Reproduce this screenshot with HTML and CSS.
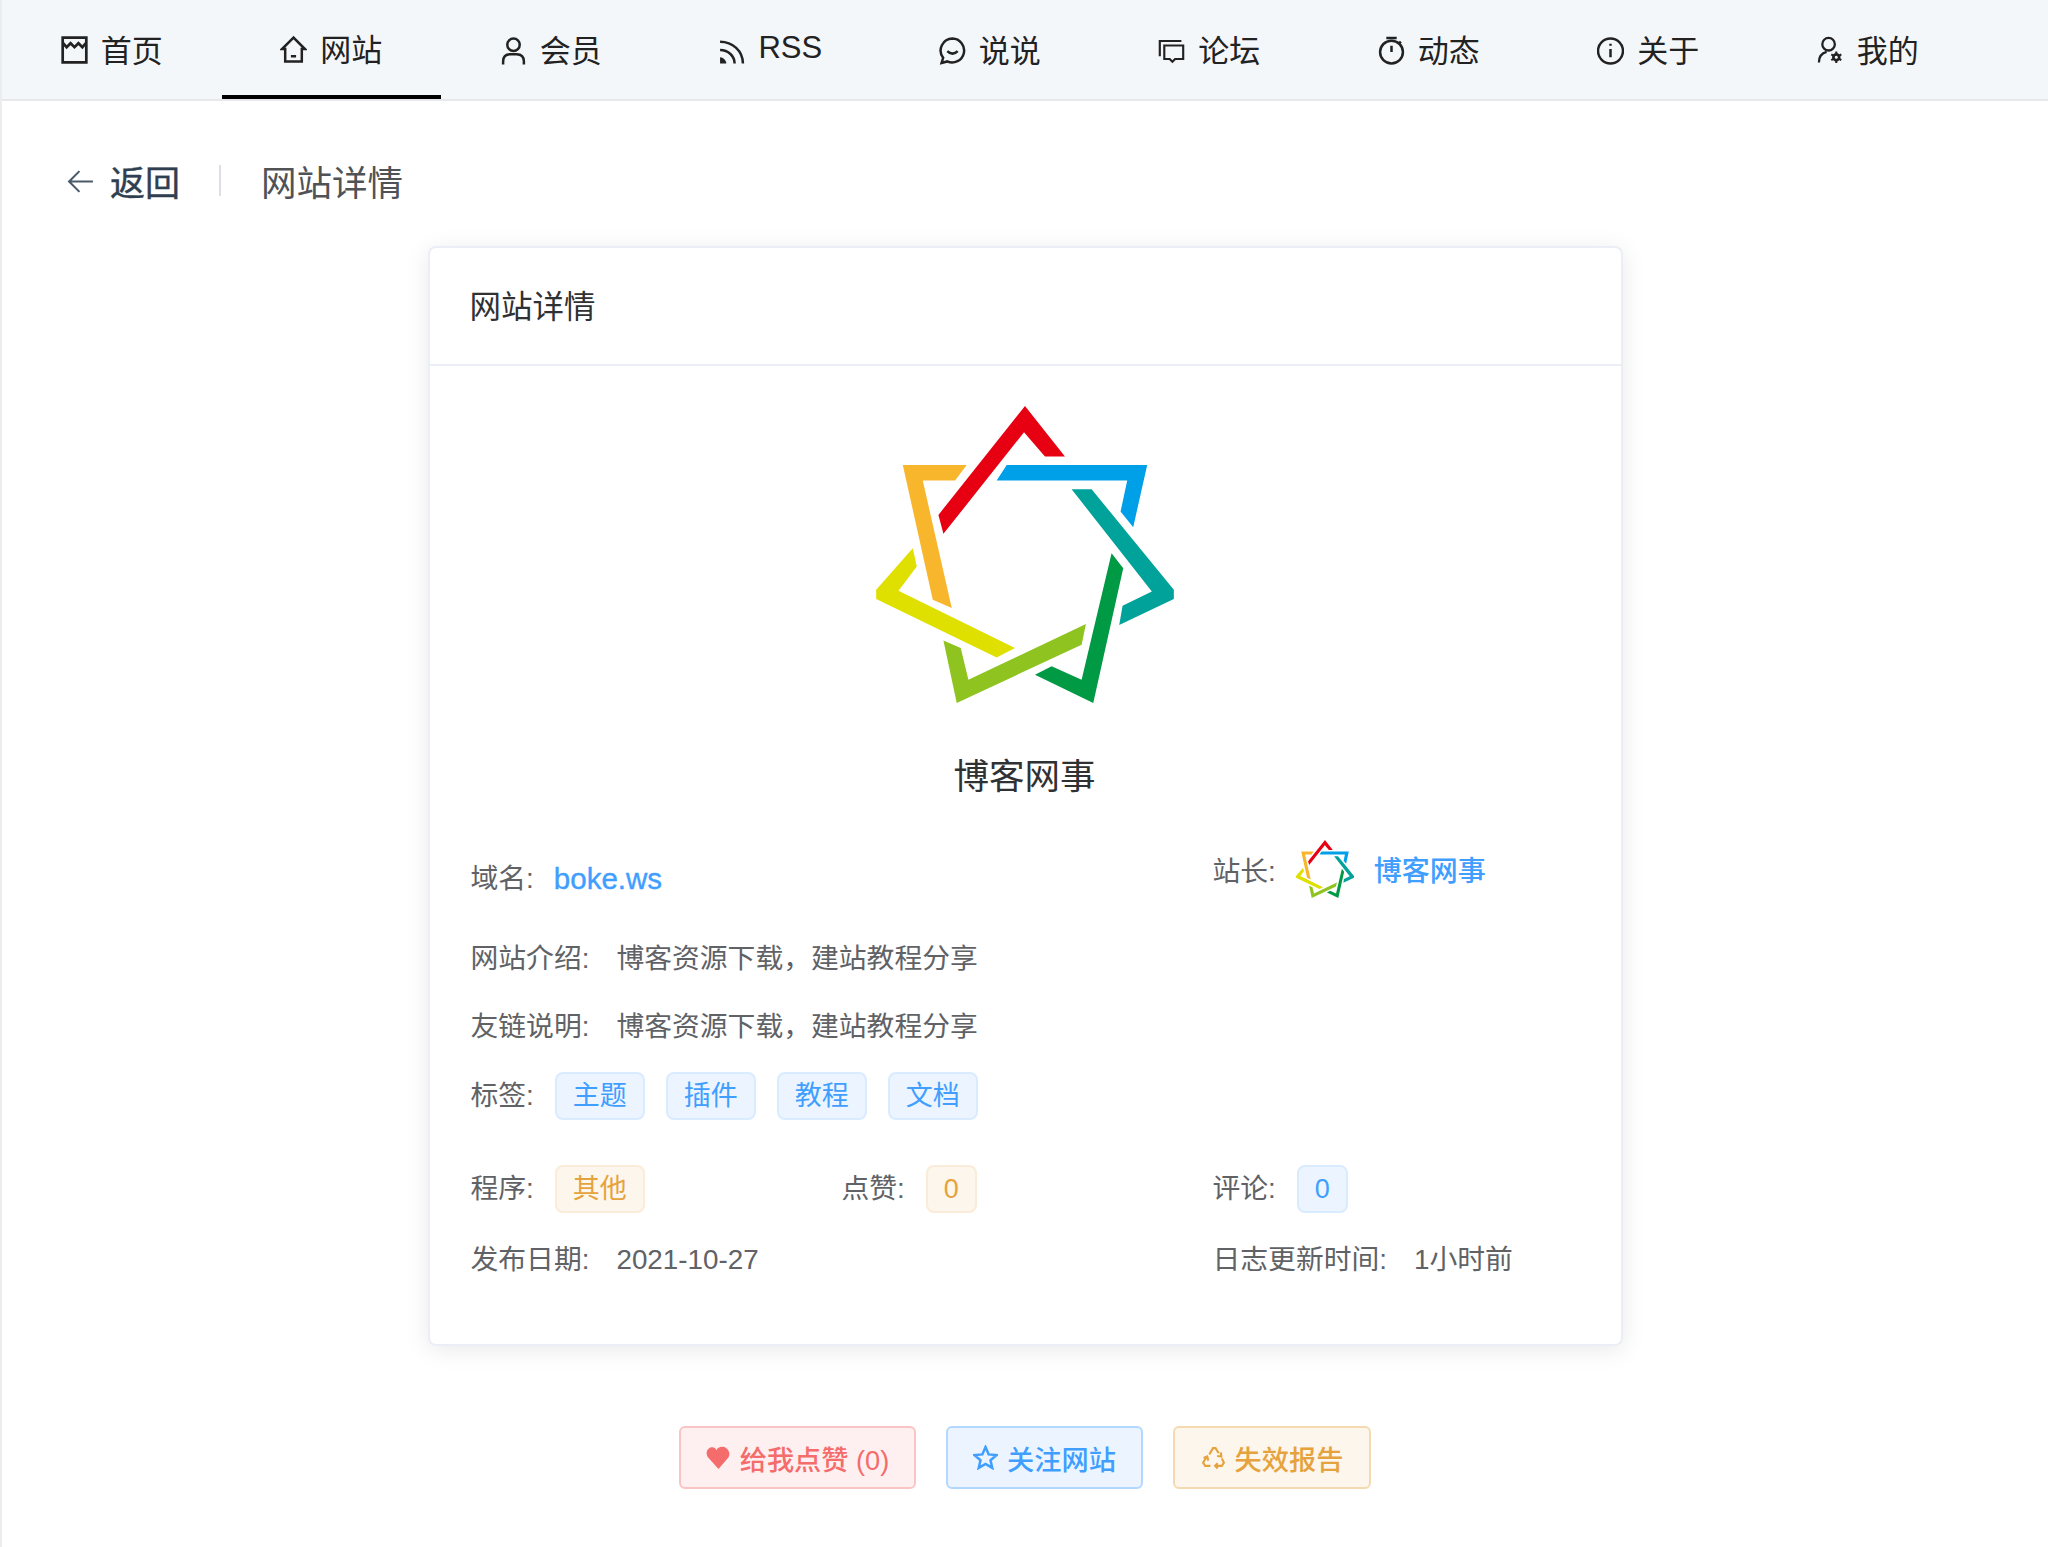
FILE: index.html
```html
<!DOCTYPE html>
<html lang="zh-CN">
<head>
<meta charset="utf-8">
<title>网站详情</title>
<link rel="stylesheet" href="styles.css">
</head>
<body>
<svg class="defs" width="0" height="0" aria-hidden="true">
  <symbol id="star-logo" viewBox="78 48 894 892">
    <polygon fill="#e60012" points="525,48 645,200 585,200 522,127 280,432 265,375"/>
    <polygon fill="#00a0e9" points="470,225 892,225 850,412 812,365 832,272 440,272"/>
    <polygon fill="#00a29a" points="665,298 725,298 972,600 972,628 808,706 818,648 906,605"/>
    <polygon fill="#009944" points="785,490 820,535 730,940 555,855 605,830 695,870"/>
    <polygon fill="#8fc31f" points="708,703 695,765 320,940 280,752 332,775 355,870"/>
    <polygon fill="#dfe000" points="188,475 200,530 145,603 495,775 440,803 78,628 78,600"/>
    <polygon fill="#f8b62d" points="158,225 350,225 315,272 218,272 305,655 248,630"/>
  </symbol>
</svg>
<nav class="nav">
  <a class="tab"><svg class="ico" viewBox="1 2.500 24 25"><path d="M2.500 4h21v22h-21zM2.500 8.500l3.500 4 3.500-3.500 3.500 3.500 3.500-3.500 3.500 3.500 3.500-4"/></svg>首页</a>
  <a class="tab active"><svg class="ico" viewBox="0 0 26 28"><path d="M13 3 2 14h3v12h16V14h3zM10.500 21h5"/></svg>网站</a>
  <a class="tab"><svg class="ico" viewBox="0 0 26 28"><circle cx="13" cy="9" r="6"/><path d="M3 28v-3q0-7 7-7h6q7 0 7 7v3"/></svg>会员</a>
  <a class="tab"><svg class="ico" viewBox="0 0 26 28"><path d="M2 6c12 0 22 9 22 21M2 14c8 0 14 6 14 13"/><path class="solid" d="M2 21c3 0 6 3 6 6H2z"/></svg>RSS</a>
  <a class="tab"><svg class="ico" viewBox="0 0 26 28"><path d="M13 3a11.500 11.500 0 1 1-5 22l-5.500 1.500 1.500-5A11.500 11.500 0 0 1 13 3zM8 15q5 5 10 0"/></svg>说说</a>
  <a class="tab"><svg class="ico" viewBox="0 0 30 28"><path d="M26 4H2v17M7 9h21v15H19l-3 3-3-3H7z"/></svg>论坛</a>
  <a class="tab"><svg class="ico" viewBox="0 0 26 28"><circle cx="13" cy="16" r="11"/><path d="M8 2.500h10M13 10v6M22 6l-1.500 1.500"/></svg>动态</a>
  <a class="tab"><svg class="ico" viewBox="0 0 26 28"><circle cx="13" cy="15" r="12"/><path d="M13 13v8M13 8v2"/></svg>关于</a>
  <a class="tab"><svg class="ico" viewBox="0 0 28 28"><circle cx="12" cy="8" r="6.500"/><path d="M2 27q0-9 8-11"/><circle class="gear" cx="20" cy="21.500" r="3"/><path class="teeth" d="M20 15.500v2.500M20 25v2.500M14.800 18.500l2.200 1.300M23 23.200l2.200 1.300M14.800 24.500l2.200-1.300M23 19.800l2.200-1.300"/></svg>我的</a>
</nav>

<header class="page-head">
  <a class="back"><svg class="back-ico" viewBox="0 0 26 24"><path d="M25 12H2M12 2 2 12l10 10"/></svg>返回</a>
  <span class="sep"></span>
  <span class="page-title">网站详情</span>
</header>

<main class="card">
  <div class="card-head">网站详情</div>
  <div class="card-body">
    <svg class="logo"><use href="#star-logo"/></svg>
    <h1 class="site-name">博客网事</h1>
    <div class="grid first">
      <div class="field span2 domain"><span class="label">域名:</span><a class="domain-link">boke.ws</a></div>
      <div class="field owner"><span class="label">站长:</span><svg class="avatar"><use href="#star-logo"/></svg><a class="owner-link">博客网事</a></div>
    </div>
    <div class="field wide intro"><span class="label">网站介绍:</span><span>博客资源下载，建站教程分享</span></div>
    <div class="field wide friend"><span class="label">友链说明:</span><span>博客资源下载，建站教程分享</span></div>
    <div class="field tags"><span class="label">标签:</span><span class="tag">主题</span><span class="tag">插件</span><span class="tag">教程</span><span class="tag">文档</span></div>
    <div class="grid program">
      <div class="field"><span class="label">程序:</span><span class="tag warn">其他</span></div>
      <div class="field"><span class="label">点赞:</span><span class="tag warn">0</span></div>
      <div class="field"><span class="label">评论:</span><span class="tag">0</span></div>
    </div>
    <div class="grid dates">
      <div class="field wide span2"><span class="label">发布日期:</span><span>2021-10-27</span></div>
      <div class="field wide"><span class="label">日志更新时间:</span><span>1小时前</span></div>
    </div>
  </div>
</main>

<div class="actions">
  <button class="btn red"><svg class="btn-ico" viewBox="0 0 24 24"><path class="solid" d="M12 23 2.500 12.500C0 9.500 0 5.500 2.500 3.500 5.500 1 9 2 10 5c1-3 6-4.500 9.500-2 3.500 2.500 3.500 6.500 2 9z"/></svg>给我点赞 (0)</button>
  <button class="btn blue"><svg class="btn-ico" viewBox="0 0 24 24"><path d="m12 2 3 7 7.500.7-5.700 5 1.700 7.300-6.500-3.900L5.500 22l1.700-7.300-5.700-5L9 9z"/></svg>关注网站</button>
  <button class="btn amber"><svg class="btn-ico thin" viewBox="0 0 24 24"><path d="M8 9l3.500-6H14l3 5M19 7l.5 4-4-.5M20 13l2 4-2 3h-6M16 17.500 13.500 20l2.500 2.500M9 20H4l-2-3 3-5M2.500 12.500 6 11l1 4"/></svg>失效报告</button>
</div>
</body>
</html>
```
FILE: styles.css
```css
* { box-sizing: border-box; }
html, body { margin: 0; padding: 0; }
body {
  height: 1547px;
  overflow: hidden;
  background: #fff;
  border-left: 2px solid #ececec;
  font-family: "Liberation Sans", "Noto Sans CJK SC", sans-serif;
  color: #606266;
}
.defs { position: absolute; }

.nav {
  display: flex;
  height: 101px;
  background: #f4f7fa;
  border-bottom: 2px solid #e6e8eb;
}
.tab {
  width: 219.5px;
  height: 99px;
  display: flex;
  align-items: center;
  justify-content: center;
  gap: 13px;
  font-size: 31px;
  color: #222;
  border-bottom: 3px solid transparent;
}
.tab.active { border-bottom: 4px solid #000; }
.ico {
  width: 27px;
  height: 30px;
  margin-top: 3px;
  fill: none;
  stroke: #222;
  stroke-width: 2.400;
}
.ico .solid { fill: #222; stroke: none; }
.ico .gear { fill: none; stroke-width: 2.800; }
.ico .teeth { stroke-width: 2.200; }

.page-head {
  display: flex;
  align-items: center;
  height: 34px;
  margin: 62px 0 49px 65px;
}
.back {
  display: flex;
  align-items: center;
  gap: 16px;
  font-size: 35px;
  color: #303f50;
  -webkit-text-stroke: .4px #303f50;
}
.back-ico {
  width: 27px;
  height: 25px;
  margin-top: 2px;
  fill: none;
  stroke: #4a5a6b;
  stroke-width: 2;
}
.sep {
  width: 2px;
  height: 31px;
  margin: 0 40px 0 39px;
  background: #dcdfe6;
}
.page-title { font-size: 35.500px; color: #505255; }

.card {
  width: 1195px;
  height: 1100px;
  margin: 0 auto;
  background: #fff;
  border: 2px solid #ebeef5;
  border-radius: 8px;
  box-shadow: 0 4px 24px rgba(0, 0, 0, .09);
}
.card-head {
  height: 118px;
  padding: 41px 0 0 40px;
  font-size: 31.500px;
  line-height: 36px;
  color: #303133;
  border-bottom: 2px solid #ebeef5;
}
.card-body { display: flex; flex-direction: column; padding: 40px 40px 0 41px; }
.logo {
  align-self: center;
  width: 298px;
  height: 297px;
  margin-left: -2px;
}
.site-name {
  margin: 51px 0 40px;
  height: 46px;
  font-size: 35.500px;
  font-weight: 400;
  line-height: 46px;
  text-align: center;
  color: #303133;
  padding-right: 2px;
}

.grid { display: grid; grid-template-columns: repeat(3, 371px); }
.span2 { grid-column: span 2; }
.field {
  display: flex;
  align-items: center;
  min-height: 40px;
  gap: 21px;
  font-size: 27.800px;
  line-height: 40px;
}
.field.wide { gap: 27px; }
.first { height: 59px; }
.domain { align-self: start; margin-top: 19px; gap: 20px; }
.domain-link { font-size: 29.500px; color: #409eff; -webkit-text-stroke: .4px #409eff; }
.owner { align-self: start; height: 58px; gap: 20px; }
.owner .label { margin-top: 6px; }
.avatar { width: 58px; height: 58px; }
.owner-link { margin-top: 6px; color: #409eff; font-weight: 500; font-size: 28px; }
.intro { margin-top: 40px; }
.friend { margin-top: 28px; }
.tags { margin-top: 25px; }
.program { margin-top: 45px; }
.dates { margin-top: 27px; }

.tag {
  display: inline-flex;
  align-items: center;
  height: 48px;
  padding: 0 16px;
  font-size: 27px;
  color: #409eff;
  background: #ecf5ff;
  border: 2px solid #d9ecff;
  border-radius: 8px;
}
.tag.warn { color: #e6a23c; background: #fdf6ec; border-color: #faecd8; }

.actions {
  display: flex;
  justify-content: center;
  gap: 30px;
  margin-top: 80px;
}
.btn {
  display: flex;
  align-items: center;
  justify-content: center;
  gap: 9px;
  height: 63px;
  padding: 0;
  font-family: inherit;
  font-size: 27.200px;
  font-weight: 500;
  border: 2px solid;
  border-radius: 6px;
}
.btn-ico { width: 25px; height: 25px; fill: none; stroke: currentColor; stroke-width: 2.400; }
.btn-ico.thin { stroke-width: 2; }
.btn-ico .solid { fill: currentColor; stroke: none; }
.red { width: 237px; color: #f56c6c; background: #fef0f0; border-color: #fbc4c4; }
.blue { width: 197px; color: #409eff; background: #ecf5ff; border-color: #b3d8ff; }
.amber { width: 198px; color: #e6a23c; background: #fdf6ec; border-color: #f5dab1; }
```
